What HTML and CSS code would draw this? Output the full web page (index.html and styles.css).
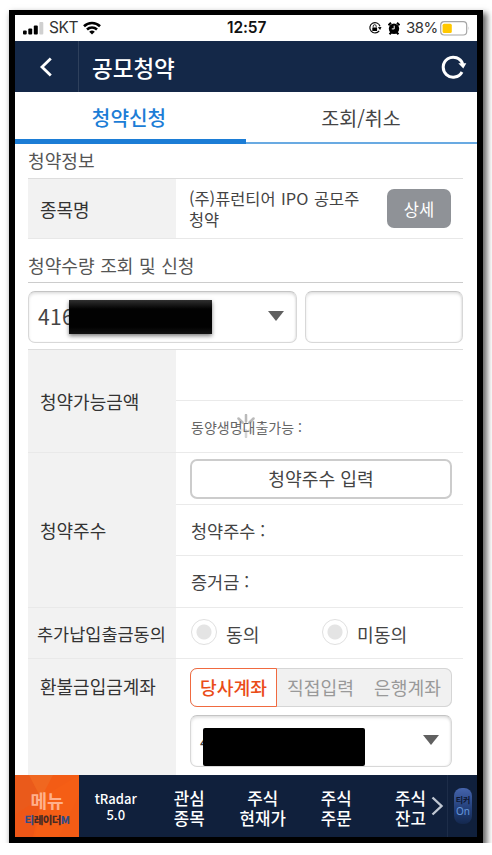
FILE: index.html
```
<!DOCTYPE html>
<html lang="ko">
<head>
<meta charset="utf-8">
<title>공모청약</title>
<link rel="stylesheet" href="styles.css">
</head>
<body>
<div class="phone">
  <div class="status">
    <svg class="signal" width="21" height="13" viewBox="0 0 21 13"><rect x="0" y="8.5" width="3.7" height="4" rx="1"/><rect x="5.3" y="6.5" width="3.9" height="6" rx="1"/><rect x="10.8" y="3.5" width="4" height="9" rx="1"/><rect x="16.3" y="0" width="4" height="12.5" rx="1" fill="#d0d0d0"/></svg>
    <span class="carrier">SKT</span>
    <svg class="wifi" width="18" height="14" viewBox="0 0 18 14"><g fill="none" stroke="#000" stroke-width="2.6"><path d="M1 5.2a11.5 11.5 0 0 1 16 0"/><path d="M4 8.5a7.3 7.3 0 0 1 10 0"/></g><path d="M9 13.6 6.2 10.8a4 4 0 0 1 5.6 0z"/></svg>
    <span class="clock">12:57</span>
    <svg class="lock" width="14" height="14" viewBox="0 0 14 14"><path d="M11.2 9.9A5.2 5.2 0 1 1 12 5.2" fill="none" stroke="#111" stroke-width="1.2"/><path d="m9.8 6.2 3.7-.1-1.4 3z"/><rect x="4.3" y="6.4" width="4.8" height="3.6" rx=".6"/><path d="M5.2 6.5V5.2a1.5 1.5 0 0 1 3 0v1.3" fill="none" stroke="#111" stroke-width=".9"/></svg>
    <svg class="alarm" width="12" height="13" viewBox="0 0 12 13"><circle cx="6" cy="6.7" r="5.2"/><path d="M.5 3.2 3 .8M11.5 3.2 9 .8M1.5 12.3l2-2M10.5 12.3l-2-2" stroke="#000" stroke-width="2"/><path d="M6.2 3.7v3.2H3.8" fill="none" stroke="#fff" stroke-width="1"/></svg>
    <span class="percent">38%</span>
    <svg class="battery" width="30" height="15" viewBox="0 0 30 15"><rect x=".7" y=".7" width="26" height="13.3" rx="3.5" fill="#fff" stroke="#a6a6a6" stroke-width="1.2"/><rect x="2.6" y="2.7" width="9.2" height="9.3" rx="1.5" fill="#ffc800"/><path d="M28.6 5.2q1.200 2.200 0 4.400z" fill="#a6a6a6"/></svg>
  </div>

  <header class="header">
    <div class="back"><svg width="14" height="20" viewBox="0 0 14 20"><path d="M11.8 1.5 3 10l8.8 8.5" fill="none" stroke="#fff" stroke-width="2.8"/></svg></div>
    <h1>공모청약</h1>
    <svg class="reload" width="26" height="24" viewBox="0 0 26 24"><path d="M21 17A10 10 0 1 1 21.700 9" fill="none" stroke="#fff" stroke-width="3"/><path d="M17.300 8.300h8l-3 5.200z" fill="#fff"/></svg>
  </header>

  <nav class="tabs">
    <div class="tab active">청약신청</div>
    <div class="tab">조회/취소</div>
  </nav>

  <main class="content">
    <h2 class="first">청약정보</h2>
    <div class="stock">
      <div class="label">종목명</div>
      <div class="stock-name">(주)퓨런티어 IPO 공모주<br>청약</div>
      <button class="detail">상세</button>
    </div>
    <h2 class="second">청약수량 조회 및 신청</h2>
    <div class="inputs">
      <div class="box account"><span>416</span><i class="arrow"></i><div class="mask bevel"></div></div>
      <div class="box"></div>
    </div>

    <div class="form">
      <div class="label span2">청약가능금액</div>
      <div class="cell"></div>
      <div class="cell small">동양생명대출가능 :
        <svg class="spinner" width="22" height="24" viewBox="0 0 22 24"><g stroke="#777" stroke-width="2.5" stroke-linecap="round"><path d="M11 1v6.500M3.500 4.500l4 4M18.500 4.500l-4 4" opacity=".5"/><path d="M11 16.500V23" opacity=".3"/><path d="M4 18.500l3.500-3M18 18.500l-3.500-3" opacity=".12"/></g></svg>
      </div>
      <div class="label span3">청약주수</div>
      <div class="cell"><button class="entry">청약주수 입력</button></div>
      <div class="cell text">청약주수 :</div>
      <div class="cell text">증거금 :</div>
      <div class="label narrow">추가납입출금동의</div>
      <div class="cell radios"><i class="radio"></i><span class="agree">동의</span><i class="radio"></i><span>미동의</span></div>
      <div class="label refund">환불금입금계좌</div>
      <div class="cell refund-cell">
        <div class="segments"><span class="on">당사계좌</span><span>직접입력</span><span>은행계좌</span></div>
        <div class="box bank"><span>4</span><i class="arrow"></i><div class="mask flat"></div></div>
      </div>
    </div>
  </main>

  <footer class="bottom">
    <div class="menu">
      <svg class="facets" width="64" height="62" viewBox="0 0 64 62"><path d="M0 0h64v62H0z" fill="#f35c15"/><path d="M0 0h14l12 23L0 40z" fill="#ea5a1b"/><path d="M14 0h24L26 23z" fill="#f06720"/><path d="m26 23 38-23v20L44 62H20z" fill="#f55e15"/><path d="m0 40 26-17-8 39H0z" fill="#ee5717"/></svg>
      <b>메뉴</b><small><em>티</em>레이더<em>M</em></small>
    </div>
    <div class="item latin">tRadar<br>5.0</div>
    <div class="item">관심<br>종목</div>
    <div class="item">주식<br>현재가</div>
    <div class="item">주식<br>주문</div>
    <div class="item last">주식<br>잔고</div>
    <svg class="next" width="13" height="20" viewBox="0 0 13 20"><path d="m1.500 1.500 9 8.500-9 8.500" fill="none" stroke="#c0c7d2" stroke-width="2.400"/></svg>
    <div class="ticker"><div class="pill">티커<span>On</span></div></div>
  </footer>
</div>
</body>
</html>
```
FILE: styles.css
```
* { box-sizing: border-box; }
body {
  margin: 0;
  padding: 10px 0 0 9px;
  background: #fff;
  font-family: "Noto Sans CJK KR", sans-serif;
  color: #444;
  font-size: 18px;
}
.phone {
  width: 474px;
  height: 833px;
  border: 6px solid #000;
  border-top-width: 5px;
  background: #fff;
  box-shadow: 3px 4px 6px 1px rgba(0, 0, 0, .6);
  display: flex;
  flex-direction: column;
}

.status {
  height: 26px;
  flex: none;
  display: flex;
  align-items: center;
  padding-left: 8px;
  font: 17px/26px "Inter", sans-serif;
  color: #111;
}
.carrier { margin: 0 6px 0 5px; font-size: 15.5px; width: 28px; letter-spacing: -.4px; color: #333; }
.clock { margin-left: 126px; width: 41px; font-weight: 600; font-size: 15.5px; letter-spacing: -.1px; }
.lock { margin-left: 100px; }
.alarm { margin-left: 6px; }
.percent { margin-left: 6px; width: 34px; font-size: 15px; letter-spacing: -.5px; color: #333; }

.header {
  height: 51px;
  flex: none;
  display: flex;
  align-items: center;
  background: #142848;
  color: #fff;
}
.back {
  width: 64px;
  height: 51px;
  display: flex;
  align-items: center;
  padding-left: 24px;
  border-right: 1px solid #2e405c;
}
h1 { margin: 0 auto 0 13px; font-size: 22.5px; font-weight: 500; line-height: 50px; }
.reload { margin-right: 10px; }

.tabs { height: 52px; flex: none; display: flex; }
.tab {
  width: 231px;
  border-bottom: 2px solid #69aae2;
  height: 52px;
  line-height: 52px;
  text-align: center;
  font-size: 19.5px;
  padding-right: 1px;
}
.tab.active {
  color: #1c7dd6;
  font-weight: 500;
  font-size: 20.2px;
  border-bottom: 5px solid #1c7dd6;
  padding-right: 3px;
}

.content { height: 631px; padding: 0 14px 0 13px; }
h2 { margin: 0; font-size: 18.1px; font-weight: 400; color: #555; border-bottom: 1px solid #ddd; word-spacing: .5px; }
.first { height: 35px; line-height: 33px; }
.second { height: 44px; line-height: 52px; border-color: #ccc; }
.label {
  background: #f2f2f2;
  color: #333;
  padding-left: 12px;
  display: flex;
  align-items: center;
  border-bottom: 1px solid #e9e9e9;
}
.stock { display: flex; height: 60px; border-bottom: 1px solid #e8e8e8; }
.stock .label { width: 148px; flex: none; border: 0; }
.stock-name { width: 211px; flex: none; padding: 9px 0 0 13px; font-size: 16.4px; line-height: 21px; white-space: nowrap; word-spacing: 1px; }
.detail {
  margin-top: 10px;
  width: 64px;
  height: 39px;
  border: 0;
  border-radius: 7px;
  background: #8f9297;
  color: #fff;
  font: 16.5px/38px "Noto Sans CJK KR", sans-serif;
  padding: 0;
}
.inputs { display: flex; gap: 8px; height: 67px; padding-top: 8px; border-bottom: 1px solid #ddd; }
.box {
  width: 158px;
  height: 52px;
  border: 1.5px solid #d8d8d8;
  border-top-color: #c4c4c4;
  border-radius: 7px;
  box-shadow: inset 0 2px 3px rgba(0, 0, 0, .11), inset -1px 0 2px rgba(0, 0, 0, .06);
  display: flex;
  align-items: center;
  justify-content: space-between;
  position: relative;
  padding: 0 12px 0 9px;
}
.account { width: 269px; font-size: 21px; }
.account span { margin-top: -2px; letter-spacing: .3px; }
.arrow { border: 8px solid transparent; border-top: 10px solid #606060; border-bottom: 0; margin-top: -2px; }
.mask { position: absolute; background: #020202; }
.bevel {
  left: 40px;
  top: 8px;
  width: 143px;
  height: 34px;
  background: linear-gradient(#303030, #020202 9px, #020202 27px, #121212);
  box-shadow: 0 2px 4px rgba(0, 0, 0, .5);
}

.form { display: grid; grid-template-columns: 148px 287px; grid-template-rows: 51px 52px 52px 51px 52px 51px 117px; }
.span2 { grid-row: span 2; }
.span3 { grid-row: span 3; }
.narrow { font-size: 17.5px; padding-left: 9px; }
.cell {
  border-bottom: 1px solid #eaeaea;
  padding-left: 14px;
  display: flex;
  align-items: center;
  font-size: 17.5px;
  position: relative;
}
.text { padding-left: 15px; }
.small { font-size: 14px; color: #666; padding-left: 15px; }
.spinner { position: absolute; left: 59px; top: 13px; }
.entry {
  width: 262px;
  height: 40px;
  border: 2px solid #ccc;
  border-radius: 7px;
  background: #fff;
  color: #444;
  padding: 0;
  font: 18.2px/35px "Noto Sans CJK KR", sans-serif;
}
.radio {
  width: 26px;
  height: 26px;
  border-radius: 50%;
  border: 1.5px solid #e0e0e0;
  background: radial-gradient(circle, #e4e4e4 7px, #fff 8px);
  margin-top: -2px;
}
.radios { padding-left: 15px; }
.radios span { margin-left: 9px; font-size: 18.2px; padding-top: 1px; }
.radios .agree { width: 96px; }
.refund { align-items: flex-start; padding-top: 14px; border: 0; }
.refund-cell { flex-direction: column; align-items: flex-start; border: 0; padding-top: 9px; }
.segments {
  width: 262px;
  height: 39px;
  flex: none;
  display: flex;
  background: #f1f1f1;
  border-radius: 7px;
  box-shadow: inset 0 0 0 1px #d5d5d5;
  line-height: 38px;
  font-size: 18.2px;
  color: #999;
}
.segments span { width: 87px; text-align: center; }
.segments .on {
  border: 1.5px solid #f06a40;
  border-radius: 7px 0 0 7px;
  background: #fff;
  color: #ea4c18;
  font-weight: 500;
  line-height: 36px;
}
.bank { width: 262px; margin-top: 8px; flex: none; }
.flat { left: 12px; top: 12px; width: 162px; height: 38px; background: #000; border-radius: 2px; }

.bottom { height: 62px; flex: none; display: flex; align-items: center; background: #10203c; color: #fff; }
.menu {
  width: 64px;
  height: 62px;
  flex: none;
  position: relative;
  display: flex;
  flex-direction: column;
  align-items: center;
}
.facets { position: absolute; left: 0; top: 0; }
.menu b { position: relative; font-size: 18px; line-height: 24px; margin-top: 13px; color: #ffb08c; font-weight: 700; }
.menu small { position: relative; font-size: 10.5px; line-height: 14px; margin-top: 1px; font-weight: 900; color: #4a2a24; letter-spacing: -.6px; white-space: nowrap; }
.menu em { font-style: normal; color: #314d86; }
.item { width: 73.5px; flex: none; text-align: center; font-size: 16.8px; line-height: 20.5px; font-weight: 500; padding-top: 4px; }
.latin { font-size: 13px; line-height: 16px; padding-top: 2px; }
.last { width: 58px; text-align: right; padding-right: 5px; white-space: nowrap; }
.next { flex: none; }
.ticker { height: 62px; flex: none; border-left: 1px solid #1d2d49; margin-left: auto; width: 30px; padding: 13px 0 0 6px; }
.pill {
  width: 18px;
  height: 36px;
  border-radius: 8px;
  background: linear-gradient(#4564ac, #213d77 60%, #14284e);
  color: #0d1730;
  font-size: 8px;
  line-height: 11px;
  padding-top: 6px;
  text-align: center;
  white-space: nowrap;
  font-weight: 700;
}
.pill span { display: block; color: #6597dc; font: 10px/12px "Noto Sans", sans-serif; }
```
